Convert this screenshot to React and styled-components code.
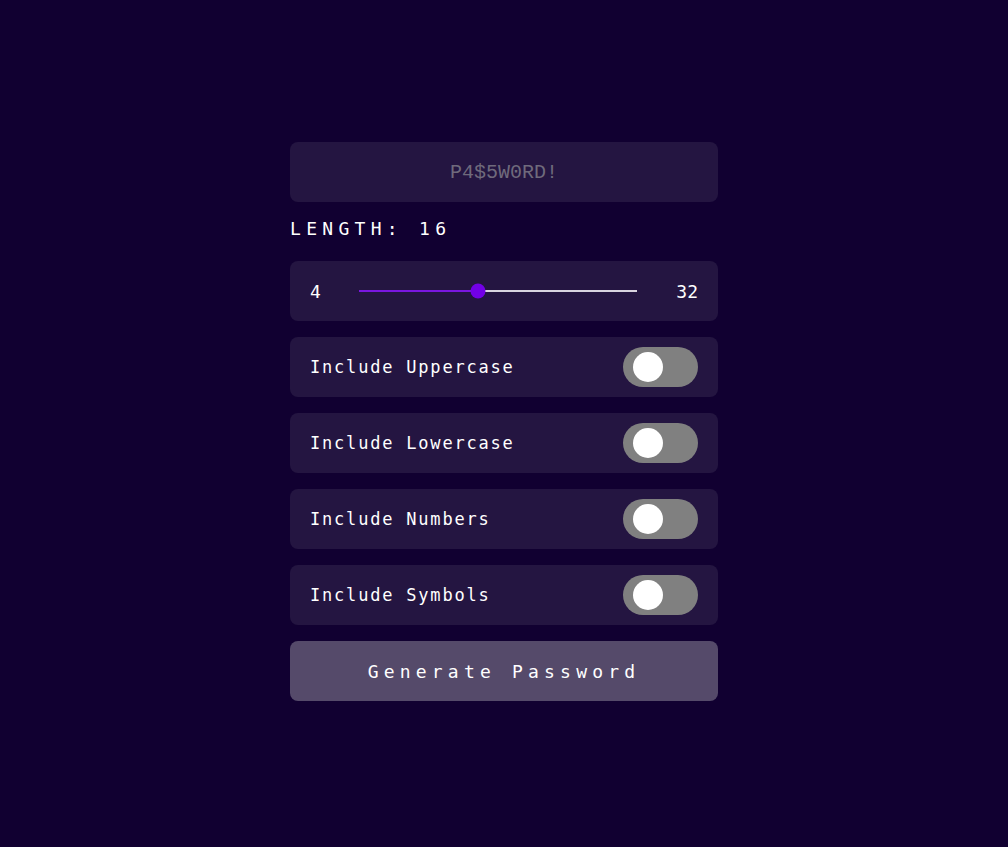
import React, { useState } from 'react';
import styled, { createGlobalStyle } from 'styled-components';

const GlobalStyle = createGlobalStyle`
  * { box-sizing: border-box; }
  body {
    margin: 0;
    background: #110031;
    font-family: "DejaVu Sans Mono", "Liberation Mono", monospace;
    color: #ffffff;
  }
`;

const options = [
  { key: 'upper', label: 'Include Uppercase' },
  { key: 'lower', label: 'Include Lowercase' },
  { key: 'numbers', label: 'Include Numbers' },
  { key: 'symbols', label: 'Include Symbols' },
];

const MIN = 4;
const MAX = 32;

export default function App() {
  const [length] = useState(16);
  const [flags, setFlags] = useState({ upper: false, lower: false, numbers: false, symbols: false });
  const pct = ((length - MIN) / (MAX - MIN)) * 100;

  return (
    <Page>
      <GlobalStyle />
      <Card>
        <Output>P4$5W0RD!</Output>
        <LengthLabel>LENGTH: {length}</LengthLabel>
        <Panel>
          <RangeValue>{MIN}</RangeValue>
          <Track>
            <Fill style={{ width: `${pct}%` }} />
            <Thumb style={{ left: `${pct}%` }} />
          </Track>
          <RangeValue>{MAX}</RangeValue>
        </Panel>
        {options.map((opt) => (
          <Panel key={opt.key}>
            <OptionLabel>{opt.label}</OptionLabel>
            <Switch
              on={flags[opt.key]}
              onClick={() => setFlags({ ...flags, [opt.key]: !flags[opt.key] })}
            >
              <Knob on={flags[opt.key]} />
            </Switch>
          </Panel>
        ))}
        <GenerateButton>Generate Password</GenerateButton>
      </Card>
    </Page>
  );
}

const Page = styled.div`
  min-height: 100vh;
  display: flex;
  align-items: center;
  justify-content: center;
  padding-bottom: 4px;
`;
const Card = styled.div`
  width: 428px;
  display: flex;
  flex-direction: column;
  gap: 16px;
`;
const Output = styled.div`
  height: 60px;
  border-radius: 8px;
  background: #241541;
  display: flex;
  align-items: center;
  justify-content: center;
  font-family: "Liberation Mono", "DejaVu Sans Mono", monospace;
  font-size: 20px;
  color: #6f6a7c;
`;
const LengthLabel = styled.div`
  font-size: 18px;
  letter-spacing: 5.3px;
  margin: 0 0 5px;
  line-height: 22px;
`;
const Panel = styled.div`
  height: 60px;
  border-radius: 8px;
  background: #241541;
  display: flex;
  align-items: center;
  justify-content: space-between;
  padding: 0 20px;
`;
const RangeValue = styled.span`
  font-size: 18px;
  width: 24px;
  &:first-child { text-align: left; }
  &:last-child { text-align: right; }
`;
const Track = styled.div`
  position: relative;
  flex: 0 0 278px;
  height: 2px;
  background: #d9d4e0;
  margin: 0 26px 0 14px;
`;
const Fill = styled.div`
  position: absolute;
  left: 0;
  top: 0;
  height: 2px;
  background: #7a16e0;
`;
const Thumb = styled.div`
  position: absolute;
  top: 50%;
  width: 15px;
  height: 15px;
  border-radius: 50%;
  background: #7200e6;
  transform: translate(-50%, -50%);
`;
const OptionLabel = styled.span`
  font-size: 17px;
  letter-spacing: 1.8px;
`;
const Switch = styled.button`
  width: 75px;
  height: 40px;
  border: none;
  border-radius: 20px;
  padding: 0 0 0 10px;
  background: ${({ on }) => (on ? '#7a16e0' : '#808080')};
  display: flex;
  align-items: center;
  cursor: pointer;
`;
const Knob = styled.span`
  width: 30px;
  height: 30px;
  border-radius: 50%;
  background: #ffffff;
  transform: translateX(${({ on }) => (on ? '25px' : '0')});
`;
const GenerateButton = styled.button`
  height: 60px;
  border: none;
  border-radius: 8px;
  background: #554a6a;
  color: #ffffff;
  font-family: "DejaVu Sans Mono", "Liberation Mono", monospace;
  font-size: 18px;
  letter-spacing: 5.2px;
  cursor: pointer;
`;
